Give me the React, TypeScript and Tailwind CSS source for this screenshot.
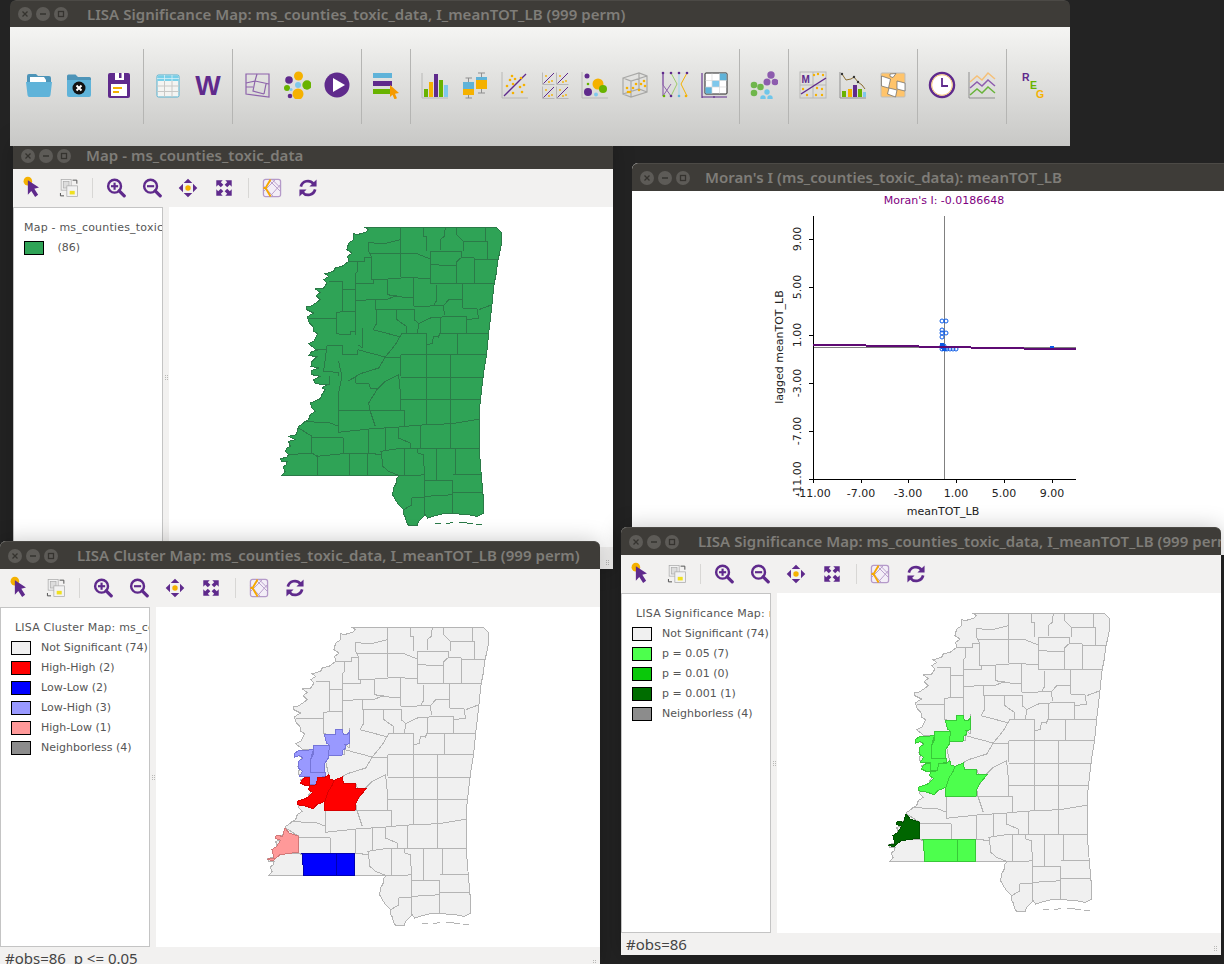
import React from "react";

const PU = "#5f2a8c";
const BL = "#5fb3d9";
const GO = "#f5b100";
const GR = "#68b300";

const S = ({ s = 28, children }: { s?: number; children: React.ReactNode }) => (
  <svg width={s} height={s} viewBox="0 0 28 28" fill="none">{children}</svg>
);

const Folder = () => (<S>
  <path d="M2 5q0-2 2-2h7l2 2h11q2 0 2 2v5H2z" fill="#4d94b8" />
  <path d="M5 6h14l2 3v4H5z" fill="#fff" />
  <path d="M1 11h26l-1.500 13q-.2 2-2 2h-19q-1.800 0-2-2z" fill={BL} />
</S>);
const FolderClose = () => (<S>
  <path d="M2 5q0-1.500 1.500-1.500h7l2.500 2.500h11.500q1.500 0 1.500 1.500V10H2z" fill="#4d94b8" />
  <path d="M2 9h24v15q0 2-2 2H4q-2 0-2-2z" fill={BL} />
  <circle cx="14" cy="17" r="6.500" fill="#111" />
  <path d="M11.500 14.500l5 5m0-5l-5 5" stroke="#fff" strokeWidth="2" />
</S>);
const Save = () => (<S>
  <path d="M3 4q0-2 2-2h18q2 0 2 2v21q0 2-2 2H5q-2 0-2-2z" fill={PU} />
  <path d="M10 2h9v7h-9z" fill="#fff" /><path d="M14 2h2.500v5H14z" fill={PU} />
  <path d="M6 13h16v12H6z" fill="#fff" />
  <path d="M8 16h9v2H8z" fill={GO} /><path d="M8 20h6v2H8z" fill={GO} />
</S>);
const Table = () => (<S>
  <rect x="3" y="4" width="22" height="22" rx="1.500" fill="#f4f4f2" stroke="#55b0cf" />
  <path d="M10.500 10v16M18 10v16M3 15h22M3 20.500h22" stroke="#c8c8c6" />
  <path d="M3.500 5.500q0-1 1-1h19q1 0 1 1V10h-21z" fill="#78cfe8" />
  <path d="M10.500 4v6M18 4v6M3 7.500h22" stroke="#d8f0f6" strokeWidth=".8" />
</S>);
const WIc = () => (<svg width="28" height="28" viewBox="0 0 28 28"><text x="14" y="23.500" textAnchor="middle" fontFamily="'Liberation Sans',sans-serif" fontWeight="700" fontSize="27" fill={PU}>W</text></svg>);
const MapIc = () => (<S>
  <path d="M3 3h23v23L3 23z" stroke="#8d63ab" strokeWidth="1.200" />
  <path d="M3 12l9-2 2-7M12 10l14 3M12 10l-2 10 11 3M21 23l2-10M3 16h7" stroke="#8d63ab" strokeWidth="1.200" />
</S>);
const Cluster = () => (<S>
  <circle cx="15.500" cy="5" r="4.500" fill={GO} /><circle cx="6" cy="9" r="3.800" fill={PU} />
  <circle cx="24" cy="14" r="4.700" fill={GR} /><circle cx="15" cy="14" r="3" fill="#7fc8ec" />
  <circle cx="15" cy="23" r="5.500" fill={GO} /><circle cx="4" cy="17" r="3" fill={GR} />
  <circle cx="8" cy="18.500" r="1.500" fill="#7fc8ec" /><circle cx="7" cy="25" r="2.300" fill={PU} />
</S>);
const Play = () => (<S>
  <circle cx="14" cy="14" r="12.500" fill={PU} /><path d="M10 7l12 7-12 7z" fill="#fff" />
</S>);
const BarsCur = () => (<S>
  <rect x="1" y="2" width="19" height="5" fill={BL} /><rect x="1" y="10" width="19" height="5" fill={PU} />
  <rect x="1" y="18" width="18" height="5" fill={GR} />
  <path d="M18 14l9 8-4 .8 2 4.500-2.500 1-2-4.500L18 26z" fill="#f59a00" />
</S>);
const Hist = () => (<S>
  <path d="M1 2v25h26" stroke="#b8b8b6" />
  <rect x="3" y="18" width="4" height="8" fill={GR} /><rect x="8" y="11" width="4" height="15" fill={GO} />
  <rect x="13" y="3" width="4" height="23" fill={PU} /><rect x="18" y="9" width="4" height="17" fill={GR} />
  <rect x="23" y="14" width="4" height="12" fill="#7fc8ec" />
</S>);
const Box = () => (<S>
  <path d="M4.500 7H11M7.500 7v20M4.500 27H11M17 2h7M20.500 2v20M17 22h7" stroke="#8f8f8f" />
  <rect x="2" y="11" width="11" height="7" fill={BL} /><rect x="2" y="18" width="11" height="6" fill={GO} />
  <rect x="15" y="6" width="11" height="3" fill={BL} /><rect x="15" y="9" width="11" height="9" fill={GO} />
</S>);
const Scatter = () => (<S>
  <path d="M1 1v26h26" stroke="#b8b8b6" /><path d="M3 25L25 3" stroke={PU} strokeWidth="1.300" />
  {[[11, 5], [14, 8], [9, 9], [20, 7], [6, 15], [12, 13], [19, 16], [23, 14], [12, 22], [21, 21]].map(([x, y], i) => <circle key={i} cx={x} cy={y} r="1.300" fill={GO} />)}
</S>);
const Mini = ({ x, y }: { x: number; y: number }) => (<g transform={`translate(${x} ${y})`}>
  <path d="M.5 .5v12h12" stroke="#b8b8b6" /><path d="M1.500 11.500L12 1" stroke={PU} />
  <circle cx="4" cy="4" r=".9" fill={GO} /><circle cx="10" cy="9" r=".9" fill={GO} /><circle cx="7" cy="10" r=".9" fill={GO} />
</g>);
const Matrix = () => (<S><Mini x={1} y={1} /><Mini x={15} y={1} /><Mini x={1} y={15} /><Mini x={15} y={15} /></S>);
const Bubble = () => (<S>
  <path d="M1 1v26h26" stroke="#b8b8b6" />
  <circle cx="6" cy="5" r="2.500" fill={PU} /><circle cx="7" cy="13" r="1.300" fill={GR} />
  <circle cx="7" cy="21" r="4" fill={PU} /><circle cx="17" cy="13" r="5.500" fill={GO} />
  <circle cx="22" cy="18" r="4" fill={GR} /><circle cx="15" cy="23.500" r="2" fill="#7fc8ec" />
</S>);
const Cube = () => (<S>
  <path d="M2 7l16-5 8 3v16l-16 5-8-3z M2 7l8 3 16-5M10 10v16M2 23l16-5 8 3M18 2v16" stroke="#a8a8a6" strokeWidth="1.200" />
  {[[6, 17], [9, 21], [12, 17], [15, 13], [18, 19], [20, 13], [23, 10], [24, 15], [7, 21]].map(([x, y], i) => <circle key={i} cx={x} cy={y} r="1.300" fill={GO} />)}
</S>);
const Parallel = () => (<S>
  <path d="M2 2v23" stroke="#8d63ab" strokeWidth="1.200" /><path d="M2 2v12l8 11M2 25l8-12" stroke="#8d63ab" />
  <path d="M10 2l6 11-6 12" stroke="#9ccc6a" />
  <path d="M18 2v23" stroke="#9fd8ef" />
  <path d="M26 2l-6 11 6 12" stroke={GO} />
  <path d="M2 2h24" stroke="#dcdcda" />
  {[[2, 2], [10, 2], [18, 2], [26, 2]].map(([x, y], i) => <circle key={i} cx={x} cy={y} r="1.300" fill={PU} />)}
  <circle cx="3" cy="25" r="1.300" fill={GR} /><circle cx="10" cy="25" r="1.300" fill={PU} /><circle cx="18" cy="25" r="1.300" fill={BL} /><circle cx="25" cy="25" r="1.300" fill={GO} />
</S>);
const Heat = () => (<S>
  <path d="M1 2v25M1 26h25M13 25v2" stroke={PU} strokeWidth="1.100" />
  <rect x="4" y="2" width="22" height="21" rx="1" fill="#fff" stroke="#222" />
  <rect x="18.500" y="2.500" width="7" height="7" fill={BL} /><rect x="11" y="9.500" width="7.500" height="6.500" fill="#7fc8ec" />
  <rect x="4.500" y="16" width="6.500" height="6.500" fill={BL} />
  <path d="M11 2.500v20M18.500 2.500v20M4.500 9.500h21M4.500 16h21" stroke="#d8d8d8" strokeWidth=".7" />
</S>);
const Dots = () => (<S>
  <circle cx="21" cy="4" r="3.700" fill="#8d5cae" /><circle cx="17" cy="11" r="3.500" fill="#8d5cae" /><circle cx="25" cy="11" r="3.300" fill="#8d5cae" />
  <circle cx="4" cy="14" r="3.300" fill="#6fb64b" /><circle cx="10.500" cy="16" r="3.300" fill="#6fb64b" /><circle cx="4" cy="22" r="3.300" fill="#6fb64b" />
  <circle cx="17" cy="21" r="2.700" fill="#6fc6ea" /><circle cx="13" cy="27" r="2.700" fill="#6fc6ea" /><circle cx="20" cy="27" r="2.700" fill="#6fc6ea" />
</S>);
const MoranIc = () => (<svg width="28" height="28" viewBox="0 0 28 28" fill="none">
  <rect x="1" y="1" width="26" height="26" stroke="#b8b8b6" /><path d="M14 1v26M1 14h26" stroke="#b8b8b6" />
  <path d="M2 23L27 7" stroke={PU} strokeWidth="1.400" />
  <text x="2.500" y="12" fontFamily="'Liberation Sans',sans-serif" fontWeight="700" fontSize="10" fill={PU}>M</text>
  {[[15, 4], [19, 3], [24, 4], [4, 18], [8, 24], [18, 17], [23, 18], [17, 24], [23, 24]].map(([x, y], i) => <circle key={i} cx={x} cy={y} r="1.200" fill={GO} />)}
</svg>);
const BarLine = () => (<S>
  <path d="M1 1v26h26" stroke="#8f8f8f" />
  <rect x="3" y="20" width="4" height="6" fill={GR} /><rect x="9" y="18" width="4" height="8" fill={GO} />
  <rect x="14" y="14" width="4" height="12" fill={PU} /><rect x="19" y="18" width="4" height="8" fill={GR} />
  <rect x="24" y="21" width="3" height="5" fill="#7fc8ec" />
  <path d="M3 3l4 6 5-1 3-2 4 5 4 3 3 4" stroke="#8a6d2f" /><circle cx="3" cy="3" r="1.200" fill="#333" /><circle cx="15" cy="6" r="1.200" fill="#333" /><circle cx="19" cy="11" r="1.200" fill="#333" />
</S>);
const Carto = () => (<S>
  <rect x="2" y="2" width="24" height="24" rx="1" fill="#ffc46b" stroke="#bdbdbb" />
  <path d="M2.500 5l9 3-2 9-7-2zM11 3l6-.5-3 4-3-1zM10 17l8 2-1.500 7-8-3zM18 10l8 2v8l-8-2z" fill="#fff" stroke="#666" strokeWidth=".7" />
</S>);
const ClockIc = () => (<S>
  <circle cx="14" cy="14" r="12" fill="#fff" stroke={PU} strokeWidth="2.500" />
  <circle cx="14" cy="14" r="10.300" stroke="#f7c878" />
  <path d="M14 7v8h6" stroke={PU} strokeWidth="1.800" />
</S>);
const Lines = () => (<S>
  <path d="M1 1v26h26" stroke="#8f8f8f" />
  <path d="M2 11l7-6 5 4 6-7 7 6" stroke="#f5c078" strokeWidth="1.500" />
  <path d="M2 17l7-6 5 4 6-6 7 6" stroke="#8d5cae" strokeWidth="1.500" />
  <path d="M2 24l7-6 5 4 6-6 7 6" stroke="#68b33a" strokeWidth="1.500" />
</S>);
const Reg = () => (<svg width="28" height="28" viewBox="0 0 28 28" fontFamily="'Liberation Sans',sans-serif" fontWeight="700" fontSize="10.500">
  <text x="5" y="10" fill={PU}>R</text><text x="13" y="18" fill={GR}>E</text><text x="19" y="27" fill={GO}>G</text>
</svg>);

const Sel = () => (<S s={24}><circle cx="8" cy="6" r="5" fill={GO} /><path d="M8 5l13 8.500-5.500 1.500 4.500 7-3.500 2.500-4.500-7L8 22z" fill={PU} /></S>);
const Swap = () => (<S s={20}>
  <rect x="3" y="2" width="14" height="15" fill="#f2f2f2" stroke="#a8a8a8" /><rect x="6" y="5" width="8" height="9" fill="#ddd" stroke="#aaa" />
  <rect x="11" y="11" width="15" height="15" fill="#f2f2f2" stroke="#a8a8a8" /><path d="M15 18h7v5h-7z" fill="#f0e020" />
  <path d="M19 3h6v5M2 21v4h5" stroke="#555" strokeWidth="1.400" />
</S>);
const ZoomIc = ({ plus }: { plus?: boolean }) => (<S s={20}>
  <circle cx="12" cy="11.500" r="9" stroke={PU} strokeWidth="3.400" />
  <path d="M18.500 18l7 7" stroke={PU} strokeWidth="4.600" strokeLinecap="round" />
  <path d="M7 11.500h10" stroke={PU} strokeWidth="3" />
  {plus && <path d="M12 6.500v10" stroke={PU} strokeWidth="3" />}
</S>);
const Move = () => (<S s={20}>
  <path d="M14 1l6 6H8zM14 27l6-6H8zM1 14l6-6v12zM27 14l-6-6v12z" fill={PU} /><circle cx="14" cy="14" r="3.800" fill={GO} />
</S>);
const Fit = () => (<S s={18}>
  <path d="M2 2h10L9 5l4 4-4 4-4-4-3 3zM26 2H16l3 3-4 4 4 4 4-4 3 3zM2 26h10l-3-3 4-4-4-4-4 4-3-3zM26 26H16l3-3-4-4 4-4 4 4 3-3z" fill={PU} />
</S>);
const Theme = () => (<S s={20}>
  <rect x="2" y="2" width="24" height="24" rx="3" fill="#f3eef7" stroke="#b59ac9" strokeWidth="1.800" />
  <path d="M2 11L16 26M9 2l17 17M19 2L2 19M26 9L11 26M14 2l12 12" stroke="#b59ac9" strokeWidth="1.300" />
  <path d="M12 2L5 14l7 12M2 14h3" stroke="#f5a800" strokeWidth="2.600" />
</S>);
const Refresh = () => (<S s={20}>
  <path d="M4 12a10 10 0 0 1 17.500-4" stroke={PU} strokeWidth="3.800" /><path d="M26 2v10h-10z" fill={PU} />
  <path d="M24 16a10 10 0 0 1-17.500 4" stroke={PU} strokeWidth="3.800" /><path d="M2 26v-10h10z" fill={PU} />
</S>);

const Cell = ({ children }: { children: React.ReactNode }) => (
  <div className="w-10 mb-[3px] flex items-center justify-center shrink-0">{children}</div>
);
const Sep = () => (
  <div className="w-[9px] h-[75px] flex justify-center shrink-0"><div className="w-px h-full bg-[#b5b5b3]" /></div>
);
const Cell2 = ({ children }: { children: React.ReactNode }) => (
  <div className="w-9 h-full flex items-center justify-center shrink-0">{children}</div>
);
const Sep2 = () => (
  <div className="w-[11px] h-5 flex justify-center shrink-0"><div className="w-px h-full bg-[#d8d7d5]" /></div>
);

const SmallBar = () => (
  <div className="h-[38px] flex items-center pl-[2px] bg-[#f2f1f0] shrink-0">
    <Cell2><Sel /></Cell2><Cell2><Swap /></Cell2><Sep2 />
    <Cell2><ZoomIc plus /></Cell2><Cell2><ZoomIc /></Cell2><Cell2><Move /></Cell2><Cell2><Fit /></Cell2>
    <div className="w-px" /><Sep2 />
    <Cell2><Theme /></Cell2><Cell2><Refresh /></Cell2>
  </div>
);

const Ctl = ({ t }: { t: "x" | "-" | "o" }) => (
  <div className="w-[14px] h-[14px] shrink-0 rounded-full bg-[#5d5b57] flex items-center justify-center">
    <svg width="8" height="8" viewBox="0 0 8 8" fill="none" stroke="#35332f" strokeWidth="1.300">
      {t === "x" && <path d="M1.500 1.500l5 5m0-5l-5 5" />}
      {t === "-" && <path d="M1 4h6" />}
      {t === "o" && <rect x="1.500" y="1.500" width="5" height="5" />}
    </svg>
  </div>
);

const TitleBar = ({ title, cls, h = "h-[28px]" }: { title: string; cls: string; h?: string }) => (
  <div className={`${h} shrink-0 flex items-center pl-2 gap-1 rounded-t-md bg-[#3e3c38] border-t border-[#4c4a46] overflow-hidden`}>
    <Ctl t="x" /><Ctl t="-" /><Ctl t="o" />
    <span className={`${cls} shrink-0 whitespace-nowrap text-[15px] leading-none tracking-[0.04px] font-semibold text-[#7f7d78] font-['Noto_Sans',sans-serif]`}>{title}</span>
  </div>
);

const OUT = "283,22 678,22 695,40 693,75 688,100 683,120 678,160 672,190 668,225 665,255 660,300 655,340 652,375 648,410 642,445 638,475 634,510 630,545 627,575 627,600 627,640 627,685 630,730 633,765 636,800 638,820 640,880 620,890 600,886 575,885 555,880 520,882 495,888 472,895 465,885 455,895 445,905 440,918 415,918 408,905 405,892 398,880 400,870 385,855 375,840 367,825 370,805 378,790 380,775 387,768 35,766 45,755 38,742 48,735 50,726 35,725 30,716 48,714 55,705 45,695 50,685 60,680 55,665 75,660 55,650 78,645 85,620 100,610 105,605 115,600 120,585 135,575 125,565 120,550 150,537 155,525 165,510 155,505 170,495 135,492 130,480 150,470 125,465 125,452 145,445 122,440 125,425 140,410 115,408 125,395 140,392 115,372 130,365 142,342 130,335 128,320 118,310 110,292 130,280 110,270 108,262 125,258 150,240 138,228 150,218 135,208 160,205 170,190 160,180 175,170 165,162 190,155 195,145 215,140 235,125 232,110 245,100 230,90 235,70 250,60 250,42 260,45 285,38 295,30";

const LINES = [
  "392,22 392,100", "460,22 460,50 470,50 470,95", "525,22 522,50 512,58 512,92", "560,22 560,45 580,65 578,95", "645,22 645,65", "580,65 652,65 652,120",
  "296,68 325,72 350,70 390,60", "296,100 392,102 440,102 480,118", "296,68 295,95 303,110 303,178",
  "482,95 575,95 575,112 560,125 560,192", "482,95 482,192", "482,135 560,138", "575,112 612,115 612,190", "612,120 683,120",
  "392,100 392,172", "303,178 352,178", "392,172 480,177", "352,178 352,225", "352,178 430,172", "352,225 395,232 430,232", "430,172 430,260",
  "482,192 672,190", "500,195 500,240 490,258", "578,192 578,265", "263,125 263,155 257,160 257,345", "235,125 263,125 283,125 283,112 303,112",
  "257,192 310,192 310,178", "218,185 218,275 198,280 198,340", "175,185 218,185", "218,208 257,208", "218,275 257,275", "115,295 198,295",
  "257,242 315,240 352,238 380,228", "315,240 315,268 430,268", "320,268 320,310 308,330", "430,260 520,258 535,240 578,240 578,265 620,268 625,295 590,300",
  "520,258 522,285", "432,268 432,300 445,312 480,295 512,292", "512,292 588,290 590,340", "512,292 512,340", "380,268 380,300 408,320 408,340",
  "395,340 468,340 468,405", "468,375 485,372 490,350 505,352 508,340 655,340", "562,340 562,405", "445,312 442,340", "665,255 625,270",
  "308,330 385,350", "278,325 278,385 262,375", "198,340 210,345 240,345 240,335 258,335", "395,340 375,375 345,412 325,445 270,462 232,485",
  "262,390 345,412 392,415", "392,405 392,470", "392,405 648,405", "468,405 468,615", "542,405 542,610", "392,472 638,472", "392,538 632,538",
  "385,465 345,485 320,510 295,550 300,575 315,620", "385,465 392,538 392,570", "205,545 205,640", "205,572 300,572", "300,572 403,572 403,620", "403,620 468,615 545,612 627,598",
  "540,612 540,685", "452,618 452,685", "295,628 340,625 385,622 403,620", "202,638 295,628 295,700", "345,625 345,690", "385,622 385,655 420,670 420,685", "372,688 627,685", "332,695 372,688",
  "443,685 443,700 460,705 462,765 463,783", "500,685 500,783", "557,685 557,765", "403,685 403,765", "332,695 338,740 355,755 387,768", "387,768 425,768 463,765", "463,783 548,783", "548,765 635,765", "548,783 548,880", "548,818 638,818", "463,830 548,825", "463,783 463,890", "425,835 463,832", "425,835 425,855 400,870",
  "125,652 218,652 220,700", "125,652 125,700", "85,625 125,650", "100,605 180,610 205,620", "55,705 125,700 140,710 238,700 292,700 332,705", "142,705 142,766", "238,700 238,766", "292,700 292,766",
  "170,378 218,378 218,405", "170,378 160,455 205,458 205,470", "135,390 170,390", "218,405 262,405 262,390", "178,470 178,495 150,495", "205,425 215,470 205,520 205,545", "232,485 255,472 257,490 295,490 300,505 325,505",
];
const ISLES = ["495,910 513,912", "527,913 548,908", "567,907 608,912", "618,915 636,916"];

type Hi = { p: string; f: string; s: string };
const LH1 = "193,345 225,345 228,330 248,330 250,345 262,345 268,335 268,372 255,375 258,385 248,392 246,408 205,408 209,378 200,370";
const LH2 = "160,378 209,378 205,408 207,412 195,430 195,458 152,458 152,420 160,405";
const LH3 = "152,458 197,458 197,470 172,475 170,495 150,495 150,472 118,470 128,455 115,445 115,425 130,415 118,408 105,412 105,400 118,392 135,392 160,390 152,420";
const RD0 = "125,482 135,474 150,474 150,495 138,498 122,490";
const RD1 = "172,475 197,472 207,465 210,478 222,482 215,500 205,515 195,545 170,555 160,567 140,560 112,555 112,545 140,535 158,518 145,510 150,498 170,495";
const RD2 = "222,482 247,472 250,490 288,490 288,505 320,505 295,535 288,550 285,572 195,572 195,545 205,515 215,500";
const PK = "75,625 88,640 116,650 116,697 60,705 52,712 40,722 22,720 30,715 42,715 36,690 50,680 62,662 45,655 50,647 68,650";
const BL1 = "126,702 140,700 229,700 229,766 132,766";
const BL2 = "229,700 285,700 285,766 229,766";

const MapSvg = ({ fill, stroke, hi = [] }: { fill: string; stroke: string; hi?: Hi[] }) => (
  <svg className="absolute inset-0" width="444" height="340" viewBox="0 0 444 340">
    <g transform="translate(101.300 12.700) scale(.33333)" shapeRendering="crispEdges">
      <polygon points={OUT} fill={fill} stroke={stroke} strokeWidth="1" vectorEffect="non-scaling-stroke" />
      {LINES.map((l, i) => <polyline key={i} points={l} fill="none" stroke={stroke} strokeWidth="1" vectorEffect="non-scaling-stroke" />)}
      {ISLES.map((l, i) => <polyline key={i} points={l} fill="none" stroke={stroke} strokeWidth="1" vectorEffect="non-scaling-stroke" />)}
      <g transform="translate(8 0)">
        {hi.map((h, i) => <polygon key={i} points={h.p} fill={h.f} stroke={h.s} strokeWidth="1" vectorEffect="non-scaling-stroke" />)}
      </g>
    </g>
  </svg>
);

const Grip = () => (
  <div className="grid grid-cols-2 gap-[1px]">
    {[0, 1, 2, 3, 4, 5].map((i) => <div key={i} className="w-px h-px bg-[#b8b8b6]" />)}
  </div>
);

type Row = { c: string; t: string };
const Legend = ({ title, rows, tc = "pl-[4px]" }: { title: string; rows: Row[]; tc?: string }) => (
  <div className="w-[150px] h-full shrink-0 bg-white border border-[#c4c4c4] pt-[10px] pl-[10px] overflow-hidden font-['DejaVu_Sans',sans-serif] text-[11px] leading-5 text-[#555]">
    <div className={`${tc} whitespace-nowrap tracking-[0.2px]`}>{title}</div>
    {rows.map((r) => (
      <div key={r.t} className="h-5 flex items-center gap-[10px] whitespace-nowrap">
        <div className="w-5 h-[14px] border border-black shrink-0" style={{ background: r.c }} />
        <span className="whitespace-pre">{r.t}</span>
      </div>
    ))}
  </div>
);

const MapWindow = ({ pos, title, tcls, legend, status, map }: { pos: string; title: string; tcls: string; legend: React.ReactNode; status: string; map: React.ReactNode }) => (
  <div className={`absolute ${pos} w-[600px] h-[428px] flex flex-col rounded-t-md bg-[#f2f1f0] shadow-[0_0_22px_rgba(0,0,0,0.22)]`}>
    <TitleBar title={title} cls={tcls} />
    <SmallBar />
    <div className="h-[340px] flex shrink-0">
      {legend}
      <div className="w-[6px] flex items-center justify-center shrink-0"><Grip /></div>
      <div className="relative flex-1 bg-white overflow-hidden">{map}</div>
    </div>
    <div className="relative h-[22px] flex items-center pl-[5px] text-[15px] whitespace-pre text-[#444] font-['Noto_Sans',sans-serif]">
      {status}
      <div className="absolute right-1 bottom-1"><Grip /></div>
    </div>
  </div>
);

const Moran = () => {
  const xt = [["-11.00", 813], ["-7.00", 861], ["-3.00", 908], ["1.00", 956], ["5.00", 1004], ["9.00", 1052]] as [string, number][];
  const yt = [["9.00", 239], ["5.00", 287], ["1.00", 335], ["-3.00", 383], ["-7.00", 431], ["-11.00", 479]] as [string, number][];
  const pts = [[942, 321], [946, 321], [942, 330], [942, 333], [946, 333], [942, 337], [942, 346], [944, 346], [942, 349], [945, 349], [947, 349], [950, 349], [953, 349], [956, 349]];
  const fills = [[942, 345], [943, 347], [944, 349], [1052, 348]];
  return (
    <svg width="592" height="364" viewBox="632 191 592 364" fontFamily="'DejaVu Sans',sans-serif" fontSize="11">
      <text x="944" y="204" textAnchor="middle" fill="#800080">Moran's I: -0.0186648</text>
      <path d="M944.500 216v263M813 347.500h263" stroke="#808080" />
      <path d="M813.500 216v263.500H1076" stroke="#000" fill="none" shapeRendering="crispEdges" />
      {xt.map(([t, x]) => (<g key={t}><path d={`M${x + .5} 479v4`} stroke="#000" /><text x={x} y="497" textAnchor="middle" fill="#222">{t}</text></g>))}
      {yt.map(([t, y]) => (<g key={t}><path d={`M809 ${y + .5}h4`} stroke="#000" /><text transform={`translate(801 ${y}) rotate(-90)`} textAnchor="middle" fill="#222">{t}</text></g>))}
      <text x="943" y="515" textAnchor="middle" fill="#222">meanTOT_LB</text>
      <text transform="translate(783 347) rotate(-90)" textAnchor="middle" fill="#222">lagged meanTOT_LB</text>
      {pts.map(([x, y], i) => <circle key={i} cx={x} cy={y} r="2" fill="none" stroke="#0a5ae6" />)}
      {fills.map(([x, y], i) => <rect key={i} x={x - 2} y={y - 2} width="4" height="4" fill="#0a5ae6" />)}
      <path d="M813 345h53M866 346h53M919 347h52M971 347.500h53M1024 348.500h52" stroke="#5e0a73" strokeWidth="2" fill="none" shapeRendering="crispEdges" />
    </svg>
  );
};

const clusterHi: Hi[] = [
  { p: LH1, f: "#9999ff", s: "#7575d8" }, { p: LH2, f: "#9999ff", s: "#7575d8" }, { p: LH3, f: "#9999ff", s: "#7575d8" },
  { p: RD0, f: "#ff0000", s: "#d80000" }, { p: RD1, f: "#ff0000", s: "#d80000" }, { p: RD2, f: "#ff0000", s: "#d80000" },
  { p: PK, f: "#ff9999", s: "#d07878" }, { p: BL1, f: "#0000ff", s: "#0000b0" }, { p: BL2, f: "#0000ff", s: "#0000b0" },
];
const G = "#4dff4d", GS = "#38c838";
const sigHi: Hi[] = [
  { p: LH1, f: G, s: GS }, { p: LH2, f: G, s: GS }, { p: LH3, f: G, s: GS }, { p: RD0, f: G, s: GS }, { p: RD1, f: G, s: GS }, { p: RD2, f: G, s: GS },
  { p: PK, f: "#006600", s: "#005000" }, { p: BL1, f: G, s: GS }, { p: BL2, f: G, s: GS },
];

export default function App() {
  return (
    <div className="relative w-[1224px] h-[964px] overflow-hidden bg-[#232323]">
      <MapWindow
        pos="left-[13px] top-[141px]"
        title="Map - ms_counties_toxic_data"
        tcls="ml-[11px]"
        legend={<Legend title="Map - ms_counties_toxic_data" tc="" rows={[{ c: "#2fa356", t: " (86)" }]} />}
        status=""
        map={<MapSvg fill="#2fa356" stroke="#2b7a48" />}
      />

      <div className="absolute left-[632px] top-[163px] w-[600px] h-[392px] flex flex-col rounded-t-md bg-white overflow-hidden">
        <TitleBar title="Moran's I (ms_counties_toxic_data): meanTOT_LB" cls="ml-[11px]" />
        <Moran />
      </div>

      <MapWindow
        pos="left-0 top-[541px]"
        title="LISA Cluster Map: ms_counties_toxic_data, I_meanTOT_LB (999 perm)"
        tcls="ml-[15px]"
        legend={<Legend title="LISA Cluster Map: ms_counties_toxic_data" rows={[
          { c: "#f0f0f0", t: "Not Significant (74)" }, { c: "#ff0000", t: "High-High (2)" }, { c: "#0000ff", t: "Low-Low (2)" },
          { c: "#9999ff", t: "Low-High (3)" }, { c: "#ff9999", t: "High-Low (1)" }, { c: "#8c8c8c", t: "Neighborless (4)" },
        ]} />}
        status="#obs=86  p <= 0.05"
        map={<MapSvg fill="#f0f0f0" stroke="#b4b4b4" hi={clusterHi} />}
      />
      <MapWindow
        pos="left-[621px] top-[527px]"
        title="LISA Significance Map: ms_counties_toxic_data, I_meanTOT_LB (999 perm)"
        tcls="ml-[15px]"
        legend={<Legend title="LISA Significance Map: ms_counties_toxic_data" rows={[
          { c: "#f0f0f0", t: "Not Significant (74)" }, { c: "#4dff4d", t: "p = 0.05 (7)" }, { c: "#0ac80a", t: "p = 0.01 (0)" },
          { c: "#006d00", t: "p = 0.001 (1)" }, { c: "#8c8c8c", t: "Neighborless (4)" },
        ]} />}
        status="#obs=86"
        map={<MapSvg fill="#f0f0f0" stroke="#b4b4b4" hi={sigHi} />}
      />

      <div className="absolute left-[10px] top-0 w-[1060px] h-[146px] flex flex-col rounded-t-md overflow-hidden">
        <TitleBar title="LISA Significance Map: ms_counties_toxic_data, I_meanTOT_LB (999 perm)" cls="ml-[15px]" h="h-[27px]" />
        <div className="flex-1 flex items-center pl-[9px] bg-gradient-to-b from-[#f5f5f3] to-[#c8c8c6]">
          <Cell><Folder /></Cell><Cell><FolderClose /></Cell><Cell><Save /></Cell><Sep />
          <Cell><Table /></Cell><Cell><WIc /></Cell><Sep />
          <Cell><MapIc /></Cell><Cell><Cluster /></Cell><Cell><Play /></Cell><Sep />
          <Cell><BarsCur /></Cell><Sep />
          <Cell><Hist /></Cell><Cell><Box /></Cell><Cell><Scatter /></Cell><Cell><Matrix /></Cell><Cell><Bubble /></Cell><Cell><Cube /></Cell><Cell><Parallel /></Cell><Cell><Heat /></Cell><Sep />
          <Cell><Dots /></Cell><Sep />
          <Cell><MoranIc /></Cell><Cell><BarLine /></Cell><Cell><Carto /></Cell><Sep />
          <Cell><ClockIc /></Cell><Cell><Lines /></Cell><Sep />
          <Cell><Reg /></Cell>
        </div>
      </div>
    </div>
  );
}
